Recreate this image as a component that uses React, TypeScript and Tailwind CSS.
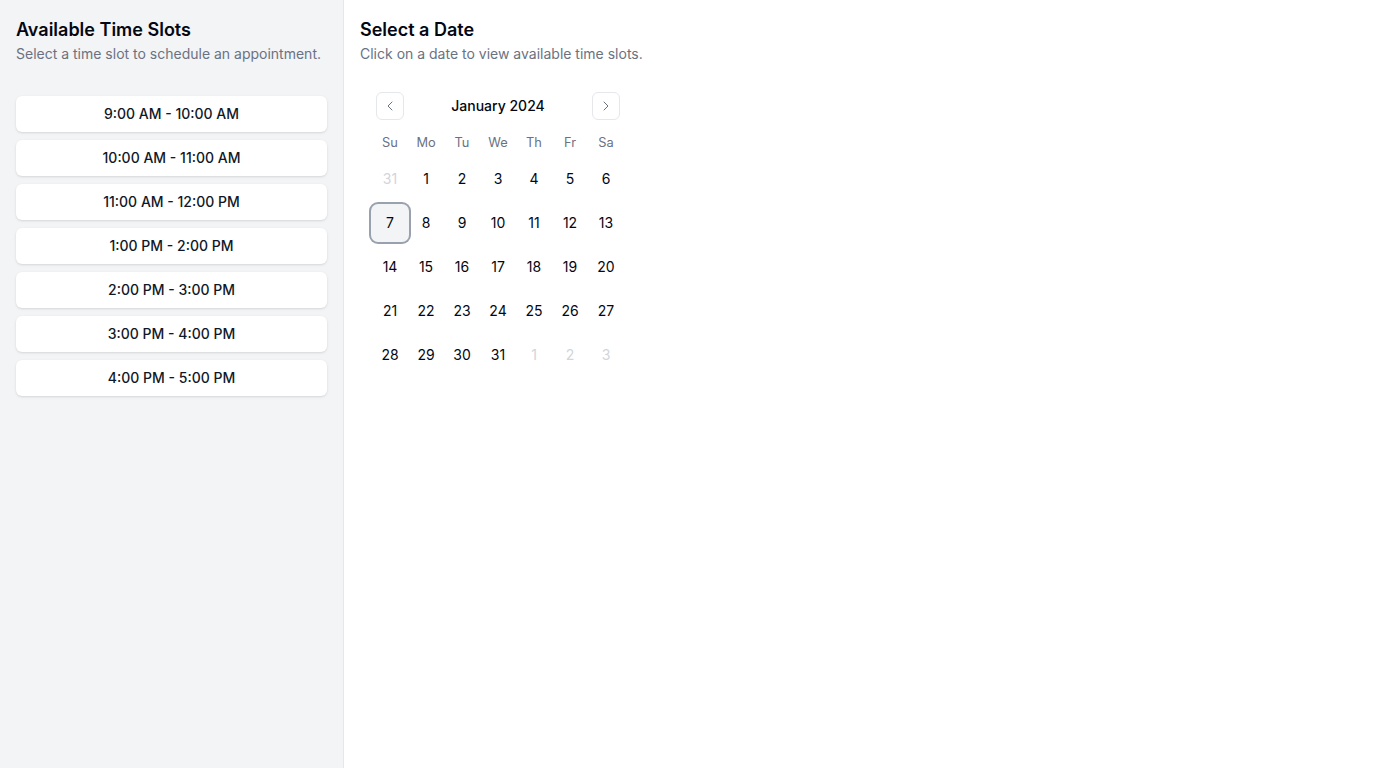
import { ChevronLeft, ChevronRight } from "lucide-react";

const SLOTS = [
  "9:00 AM - 10:00 AM",
  "10:00 AM - 11:00 AM",
  "11:00 AM - 12:00 PM",
  "1:00 PM - 2:00 PM",
  "2:00 PM - 3:00 PM",
  "3:00 PM - 4:00 PM",
  "4:00 PM - 5:00 PM",
];

const WEEKDAYS = ["Su", "Mo", "Tu", "We", "Th", "Fr", "Sa"];

type Day = { n: number; outside?: boolean };

// january 2024, starts on monday
const WEEKS: Day[][] = (() => {
  const days: Day[] = [{ n: 31, outside: true }];
  for (let i = 1; i <= 31; i++) days.push({ n: i });
  for (let i = 1; i <= 3; i++) days.push({ n: i, outside: true });
  const rows: Day[][] = [];
  for (let i = 0; i < days.length; i += 7) rows.push(days.slice(i, i + 7));
  return rows;
})();

export default function App() {
  return (
    <div
      className="flex h-[768px] w-full bg-white text-gray-950"
      style={{ fontFamily: "Inter, 'Noto Sans', sans-serif" }}
    >
      {/* sidebar */}
      <aside className="w-[344px] flex-shrink-0 border-r border-gray-200 bg-gray-100 p-4">
        <h2 className="text-lg font-semibold leading-7">Available Time Slots</h2>
        <p className="text-sm leading-5 text-gray-500">Select a time slot to schedule an appointment.</p>
        <div className="mt-8 flex flex-col gap-2">
          {SLOTS.map((s) => (
            <button
              key={s}
              type="button"
              className="h-9 w-full rounded-md bg-white text-sm font-medium text-gray-900 shadow-sm"
            >
              {s}
            </button>
          ))}
        </div>
      </aside>

      {/* main */}
      <main className="flex-1 p-4">
        <h2 className="text-lg font-semibold leading-7">Select a Date</h2>
        <p className="text-sm leading-5 text-gray-500">Click on a date to view available time slots.</p>

        <div className="mt-4 w-[276px] p-3">
          <div className="relative flex h-7 items-center justify-center">
            <span className="text-sm font-medium">January 2024</span>
            <button
              type="button"
              className="absolute left-1 top-0 flex h-7 w-7 items-center justify-center rounded-md border border-gray-200 bg-white text-gray-500"
            >
              <ChevronLeft className="h-4 w-4" strokeWidth={1.5} />
            </button>
            <button
              type="button"
              className="absolute right-1 top-0 flex h-7 w-7 items-center justify-center rounded-md border border-gray-200 bg-white text-gray-500"
            >
              <ChevronRight className="h-4 w-4" strokeWidth={1.5} />
            </button>
          </div>

          <div className="mt-[13px] flex">
            {WEEKDAYS.map((d) => (
              <div key={d} className="flex h-5 w-9 items-center justify-center text-[0.8rem] text-gray-500">
                {d}
              </div>
            ))}
          </div>

          {WEEKS.map((w, i) => (
            <div key={i} className="mt-2 flex">
              {w.map((d, j) => {
                const selected = !d.outside && d.n === 7;
                return (
                  <div
                    key={j}
                    className={
                      selected
                        ? "flex h-9 w-9 items-center justify-center rounded-md bg-gray-100 text-sm ring-2 ring-gray-400 ring-offset-1 ring-offset-gray-100"
                        : d.outside
                        ? "flex h-9 w-9 items-center justify-center text-sm text-gray-300"
                        : "flex h-9 w-9 items-center justify-center text-sm"
                    }
                  >
                    {d.n}
                  </div>
                );
              })}
            </div>
          ))}
        </div>
      </main>
    </div>
  );
}
